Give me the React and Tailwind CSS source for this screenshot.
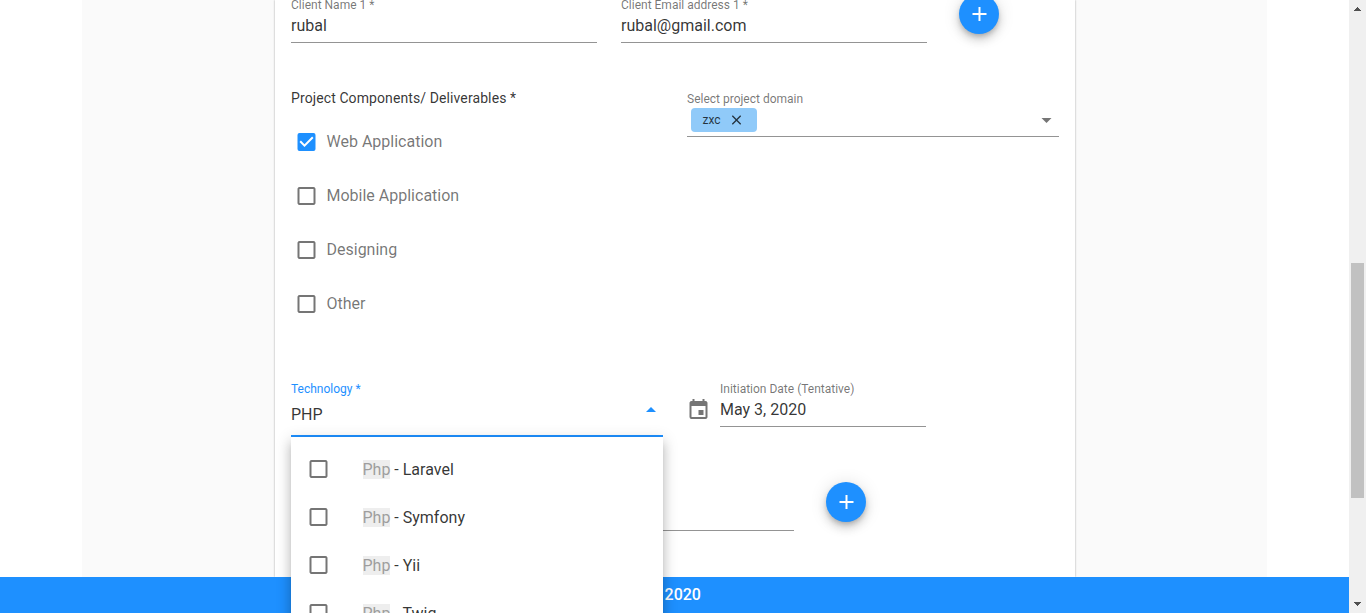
import React from "react";
import { MdEvent, MdAdd, MdClose, MdArrowDropDown, MdArrowDropUp, MdCheckBox, MdCheckBoxOutlineBlank } from "react-icons/md";

const deliverables = [
  { name: "Web Application", checked: true },
  { name: "Mobile Application", checked: false },
  { name: "Designing", checked: false },
  { name: "Other", checked: false },
];

const technologies = ["Laravel", "Symfony", "Yii", "Twig"];

function Field({ label, value, className }) {
  return (
    <div className={`h-[46px] border-b border-[#949494] ${className}`}>
      <div className="text-xs leading-4 text-black/55">{label}</div>
      <div className="mt-px text-base leading-6 text-black/80">{value}</div>
    </div>
  );
}

function AddButton({ className }) {
  return (
    <button
      aria-label="Add"
      className={`flex size-10 shrink-0 items-center justify-center rounded-full bg-[#1e90ff] text-white shadow-[0_3px_5px_-1px_rgba(0,0,0,0.2),0_6px_10px_0_rgba(0,0,0,0.14),0_1px_18px_0_rgba(0,0,0,0.12)] ${className}`}
    >
      <MdAdd size={24} className="translate-x-[0.5px]" />
    </button>
  );
}

function Scrollbar() {
  return (
    <div className="flex w-[17px] shrink-0 flex-col items-center bg-[#f0f0f0]">
      <svg width="17" height="17" shapeRendering="crispEdges" fill="#505050">
        <path d="M8 7h1v1h-1zM7 8h3v1h-3zM6 9h5v1h-5zM5 10h7v1h-7z" />
      </svg>
      <div className="mt-[246px] h-[235px] w-[13px] bg-[#c1c1c1]" />
      <svg className="mt-auto" width="17" height="17" shapeRendering="crispEdges" fill="#505050">
        <path d="M5 6h7v1h-7zM6 7h5v1h-5zM7 8h3v1h-3zM8 9h1v1h-1z" />
      </svg>
    </div>
  );
}

function TechnologyMenu() {
  return (
    <div className="absolute top-[calc(100%+2px)] left-0 z-10 h-[300px] w-full bg-white py-2 shadow-[0_5px_5px_-3px_rgba(0,0,0,0.2),0_8px_10px_1px_rgba(0,0,0,0.14),0_3px_14px_2px_rgba(0,0,0,0.12)]">
      {technologies.map((name) => (
        <div key={name} className="flex h-12 items-center pl-[15px]">
          <MdCheckBoxOutlineBlank size={24} className="shrink-0 translate-x-[0.5px] text-[#757575]" />
          <div className="mt-[2px] ml-[32.5px] text-base text-black/80">
            <span className="bg-[#eeeeee] text-[#9e9e9e]">Php</span> - {name}
          </div>
        </div>
      ))}
    </div>
  );
}

export default function App() {
  return (
    <div className="flex h-[613px] w-[1366px] overflow-hidden bg-white font-['Roboto',sans-serif]">
      <div className="flex min-w-0 flex-1 flex-col overflow-hidden">
        <main className="ml-[82px] flex h-[577px] w-[1185px] shrink-0 bg-[#fafafa] pl-[193px]">
          <section className="h-full w-[800px] bg-white px-4 shadow-[0_0_2px_rgba(0,0,0,0.35)]">
            <div className="-mt-[3px] flex gap-6">
              <Field label="Client Name 1 *" value="rubal" className="w-[306px]" />
              <Field label="Client Email address 1 *" value="rubal@gmail.com" className="w-[306px]" />
              <AddButton className="-mt-[3px] ml-2" />
            </div>

            <div className="mt-[43px] flex">
              <div className="w-[396px]">
                <h2 className="text-sm leading-6 tracking-[0.1px] text-black/80">Project Components/ Deliverables *</h2>
                <div className="mt-[5px]">
                  {deliverables.map(({ name, checked }) => (
                    <div key={name} className="flex h-[54px] items-center pl-[3px]">
                      {checked ? (
                        <MdCheckBox size={24} className="translate-x-[0.5px] text-[#1e90ff]" />
                      ) : (
                        <MdCheckBoxOutlineBlank size={24} className="translate-x-[0.5px] text-[#757575]" />
                      )}
                      <span className="ml-[8.5px] text-base text-black/55">{name}</span>
                    </div>
                  ))}
                </div>
              </div>
              <div className="mt-[5px] flex h-[46px] w-[372px] flex-col border-b border-[#949494]">
                <div className="text-xs leading-4 text-black/55">Select project domain</div>
                <div className="mt-px flex items-center pl-1">
                  <div className="flex h-6 w-[66px] items-center rounded bg-[#90caf9] pl-[11.5px] text-xs text-black/75">
                    zxc
                    <MdClose size={16} className="ml-[7px] translate-x-[0.5px]" />
                  </div>
                  <MdArrowDropDown size={24} className="ml-auto -translate-x-[0.5px] text-[#757575]" />
                </div>
              </div>
            </div>

            <div className="mt-[50px] flex h-14">
              <div className="relative flex w-[372px] flex-col border-b-2 border-[#1e90ff]">
                <div className="text-xs leading-4 text-[#1e90ff]">Technology *</div>
                <div className="flex items-start">
                  <div className="mt-1.5 text-base leading-6 text-black/80">PHP</div>
                  <MdArrowDropUp size={24} className="mt-px ml-auto text-[#1e90ff]" />
                </div>
                <TechnologyMenu />
              </div>
              <MdEvent size={24} className="mt-[17px] ml-6 -translate-x-[0.5px] text-[#757575]" />
              <Field label="Initiation Date (Tentative)" value="May 3, 2020" className="ml-[9px] w-[206px]" />
            </div>

            <div className="mt-[45px] flex h-[49px]">
              <div className="w-[503px] border-b border-[#949494]" />
              <AddButton className="ml-8" />
            </div>
          </section>
        </main>
        <footer className="flex h-9 shrink-0 items-center justify-center bg-[#1e90ff] text-base font-medium text-white">
          © 2020
        </footer>
      </div>
      <Scrollbar />
    </div>
  );
}
